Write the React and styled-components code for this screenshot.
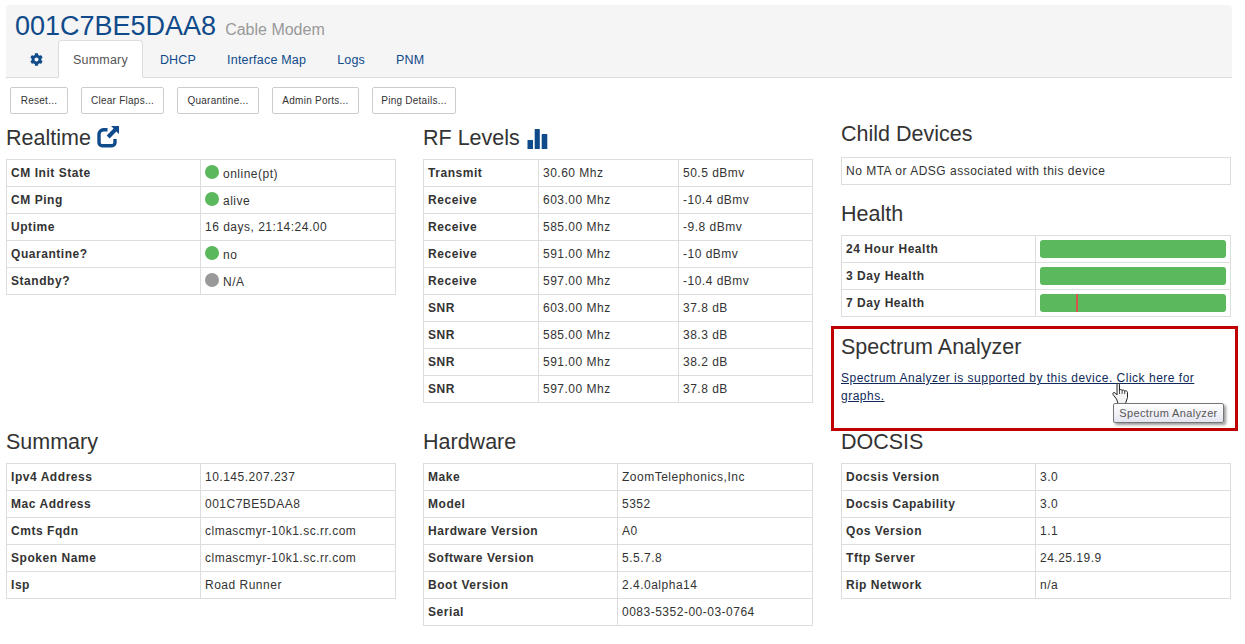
import React from "react";
import styled, { createGlobalStyle } from "styled-components";
import { FaCog } from "react-icons/fa";

const Global = createGlobalStyle`
  html, body { margin: 0; padding: 0; background: #fff; }
  body { font-family: "Liberation Sans", Arial, sans-serif; font-size: 12px; color: #333; }
`;
const Page = styled.div`
  width: 1245px; height: 644px; overflow: hidden; box-sizing: border-box; padding: 5px 14px 0 6px; position: relative;
`;
const Header = styled.header`
  background: #f5f5f5; height: 73px; box-sizing: border-box; border-bottom: 1px solid #ddd; border-radius: 4px 4px 0 0;
  padding: 8px 0 0 9px; display: flex; flex-direction: column; margin-right: -1px;
`;
const TitleRow = styled.div`display: flex; align-items: baseline; gap: 9px; height: 27px;`;
const DeviceId = styled.h1`margin: 0; font-weight: 400; font-size: 27px; line-height: 27px; color: #0f4a8a;`;
const DeviceKind = styled.small`font-size: 16px; color: #999;`;
const Tabs = styled.nav`display: flex; height: 38px; margin-bottom: -1px; gap: 1px;`;
const Tab = styled.a`
  display: flex; align-items: center; box-sizing: border-box; padding: 2px 14px 0; height: 38px; font-size: 12.5px; letter-spacing: .2px;
  color: ${p => p.$active ? "#555" : "#0f4a8a"};
  background: ${p => p.$active ? "#fff" : "transparent"};
  border: 1px solid ${p => p.$active ? "#ddd" : "transparent"};
  border-bottom-color: ${p => p.$active ? "#fff" : "transparent"};
  border-radius: 4px 4px 0 0;
  margin-right: ${p => p.$active ? 1 : 0}px;
`;
const GearTab = styled(Tab)`padding: 0 14px; font-size: 13px; margin-right: -1px;`;
const Toolbar = styled.div`display: flex; gap: 13px; padding: 9px 0 0 4px; height: 27px;`;
const Btn = styled.button`
  width: ${p => p.$w}px; height: 27px; box-sizing: border-box; padding: 0; font: 10px "Liberation Sans", Arial, sans-serif; letter-spacing: .25px; color: #333;
  background: #fff; border: 1px solid #ccc; border-radius: 2px;
`;
const Grid = styled.div`
  display: grid; grid-template-columns: 417px 418px 390px; grid-template-rows: 304px auto; margin-top: 11px;
`;
const Column = styled.section`display: flex; flex-direction: column; position: relative; width: 390px;`;
const Heading = styled.h2`
  margin: 0 0 ${p => p.$mb ?? 7}px; font-weight: 400; font-size: 21.5px; line-height: ${p => p.$lh ?? 27}px; color: #333; display: flex; align-items: center; gap: 6px;
`;
const Table = styled.table`
  width: 100%; border-collapse: collapse; table-layout: fixed; margin-bottom: ${p => p.$mb ?? 0}px;
`;
const Row = styled.tr`height: 27px;`;
const Label = styled.th`
  text-align: left; font-weight: 700; width: ${p => p.$w ?? 194}px; box-sizing: border-box; border: 1px solid #ddd; padding: 0 4px; font-size: 12px; letter-spacing: .55px; color: #333; white-space: nowrap;
`;
const Cell = styled.td`
  box-sizing: border-box; border: 1px solid #ddd; padding: 0 4px; font-size: 12px; letter-spacing: .5px; color: #333; white-space: nowrap;
  width: ${p => p.$w ? p.$w + "px" : "auto"};
`;
const Dot = styled.i`display: inline-block; width: 14px; height: 14px; border-radius: 50%; background: ${p => p.$c}; vertical-align: -1px; margin-right: 4px;`;
const Bar = styled.div`height: 18px; border-radius: 3px; background: #5cb85c; position: relative; overflow: hidden;`;
const Tick = styled.i`position: absolute; left: ${p => p.$l}px; top: 0; bottom: 0; width: 2px; background: #d9534f;`;
const SpecBox = styled.div`position: relative;`;
const Frame = styled.div`
  position: absolute; left: -10px; right: -7px; top: -9px; height: 105px; box-sizing: border-box; border: 3px solid #c00000; pointer-events: none;
`;
const SpecLink = styled.a`
  display: block; width: 356px; color: #0f2a5a; text-decoration: underline; font-size: 12px; letter-spacing: .5px; line-height: 18px; margin-top: -1px;
`;
const Tooltip = styled.div`
  position: absolute; left: 272px; top: 68px; height: 20px; width: 111px; box-sizing: border-box; border: 1px solid #767676; border-radius: 2px;
  background: linear-gradient(#fff, #e4e5f0); font-size: 11px; letter-spacing: .35px; color: #575757; line-height: 18px; text-align: center; box-shadow: 2px 2px 3px rgba(0,0,0,.4); white-space: nowrap;
`;
const Cursor = styled.svg`position: absolute; left: 271px; top: 48px;`;
const Share = styled.svg`display: block; flex: none; margin-top: -3px;`;
const Bars = styled.svg`display: block; flex: none; margin-left: 1px;`;

const ShareIcon = () => (
  <Share width="23" height="22" viewBox="0 0 23 22" aria-hidden="true">
    <path d="M10.500 3.800H6.500A4.500 4.500 0 0 0 2 8.300v8.200a3.200 3.200 0 0 0 3.200 3.200h9.600a3.200 3.200 0 0 0 3.200-3.200v-3.500" fill="none" stroke="#0f4a8a" strokeWidth="3.400" />
    <path d="M14 0h8v8l-2.600-2.600-6.800 7-2.900-2.900 6.900-6.900z" fill="#0f4a8a" />
  </Share>
);
const BarsIcon = () => (
  <Bars width="21" height="20" viewBox="0 0 21 20" aria-hidden="true">
    <path d="M0.500 11.500a.5.5 0 0 1 .5-.5h4.500a.5.5 0 0 1 .5.5V20H.5zM7.700 .5a.5.5 0 0 1 .5-.5h4.100a.5.5 0 0 1 .5.5V20H7.700zM14.700 5.500a.5.5 0 0 1 .5-.5h4.600a.5.5 0 0 1 .5.5V20h-5.600z" fill="#0f4a8a" />
  </Bars>
);
const rt = [["CM Init State", "online(pt)", "#5cb85c"], ["CM Ping", "alive", "#5cb85c"], ["Uptime", "16 days, 21:14:24.00"], ["Quarantine?", "no", "#5cb85c"], ["Standby?", "N/A", "#999"]];
const rf = [["Transmit", "30.60 Mhz", "50.5 dBmv"], ["Receive", "603.00 Mhz", "-10.4 dBmv"], ["Receive", "585.00 Mhz", "-9.8 dBmv"], ["Receive", "591.00 Mhz", "-10 dBmv"], ["Receive", "597.00 Mhz", "-10.4 dBmv"], ["SNR", "603.00 Mhz", "37.8 dB"], ["SNR", "585.00 Mhz", "38.3 dB"], ["SNR", "591.00 Mhz", "38.2 dB"], ["SNR", "597.00 Mhz", "37.8 dB"]];
const sum = [["Ipv4 Address", "10.145.207.237"], ["Mac Address", "001C7BE5DAA8"], ["Cmts Fqdn", "clmascmyr-10k1.sc.rr.com"], ["Spoken Name", "clmascmyr-10k1.sc.rr.com"], ["Isp", "Road Runner"]];
const hw = [["Make", "ZoomTelephonics,Inc"], ["Model", "5352"], ["Hardware Version", "A0"], ["Software Version", "5.5.7.8"], ["Boot Version", "2.4.0alpha14"], ["Serial", "0083-5352-00-03-0764"]];
const doc = [["Docsis Version", "3.0"], ["Docsis Capability", "3.0"], ["Qos Version", "1.1"], ["Tftp Server", "24.25.19.9"], ["Rip Network", "n/a"]];

const KV = ({ rows }) => (
  <Table><tbody>{rows.map(([k, v]) => <Row key={k}><Label>{k}</Label><Cell>{v}</Cell></Row>)}</tbody></Table>
);

export default function App() {
  return (
    <Page>
      <Global />
      <Header>
        <TitleRow><DeviceId>001C7BE5DAA8</DeviceId><DeviceKind>Cable Modem</DeviceKind></TitleRow>
        <Tabs>
          <GearTab><FaCog /></GearTab>
          <Tab $active>Summary</Tab>
          <Tab>DHCP</Tab>
          <Tab>Interface Map</Tab>
          <Tab>Logs</Tab>
          <Tab>PNM</Tab>
        </Tabs>
      </Header>
      <Toolbar>
        <Btn $w={58}>Reset...</Btn><Btn $w={83}>Clear Flaps...</Btn><Btn $w={82}>Quarantine...</Btn><Btn $w={87}>Admin Ports...</Btn><Btn $w={84}>Ping Details...</Btn>
      </Toolbar>
      <Grid>
        <Column>
          <Heading>Realtime <ShareIcon /></Heading>
          <Table><tbody>{rt.map(([k, v, c]) => (
            <Row key={k}><Label>{k}</Label><Cell>{c && <Dot $c={c} />}{v}</Cell></Row>
          ))}</tbody></Table>
        </Column>
        <Column>
          <Heading>RF Levels <BarsIcon /></Heading>
          <Table><tbody>{rf.map((r, i) => (
            <Row key={i}><Label $w={115}>{r[0]}</Label><Cell $w={140}>{r[1]}</Cell><Cell>{r[2]}</Cell></Row>
          ))}</tbody></Table>
        </Column>
        <Column>
          <Heading $lh={19} $mb={13}>Child Devices</Heading>
          <Table $mb={17}><tbody><Row><Cell>No MTA or ADSG associated with this device</Cell></Row></tbody></Table>
          <Heading $lh={24} $mb={9}>Health</Heading>
          <Table $mb={18}><tbody>
            <Row><Label>24 Hour Health</Label><Cell><Bar /></Cell></Row>
            <Row><Label>3 Day Health</Label><Cell><Bar /></Cell></Row>
            <Row><Label>7 Day Health</Label><Cell><Bar><Tick $l={36} /></Bar></Cell></Row>
          </tbody></Table>
          <SpecBox>
            <Heading $lh={24} $mb={11}>Spectrum Analyzer</Heading>
            <SpecLink>Spectrum Analyzer is supported by this device. Click here for graphs.</SpecLink>
            <Frame />
            <Cursor width="17" height="21" viewBox="0 0 17 21" aria-hidden="true">
              <path d="M5 1.500C5 .2 7.500 .2 7.500 1.500V7c.8-.8 2.300-.5 2.600.4.900-.7 2.300-.3 2.600.6 1-.5 2.800.1 2.800 1.500v5l-2 6H6L4.500 16 1 11.500c-.8-1.400.8-2.600 2-1.600l2 2z" fill="#f4f4f4" stroke="#222" strokeWidth="1" strokeLinejoin="round" />
              <path d="M7.500 7v4M10.100 7.400V11M12.700 8v3" stroke="#222" strokeWidth=".8" fill="none" />
            </Cursor>
            <Tooltip>Spectrum Analyzer</Tooltip>
          </SpecBox>
        </Column>
        <Column><Heading>Summary</Heading><KV rows={sum} /></Column>
        <Column><Heading>Hardware</Heading><KV rows={hw} /></Column>
        <Column><Heading>DOCSIS</Heading><KV rows={doc} /></Column>
      </Grid>
    </Page>
  );
}
